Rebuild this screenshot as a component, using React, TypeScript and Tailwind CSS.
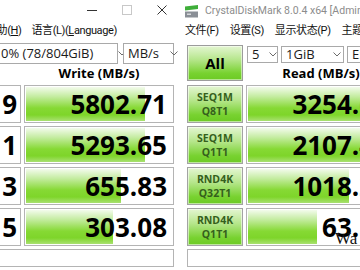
const barFill =
  "bg-[linear-gradient(to_bottom,#f3fbec_0%,#c4eca0_28%,#86d934_62%,#7ed52a_82%,#a9e171_100%)]";
const btnFill =
  "bg-[linear-gradient(to_bottom,#e4f6d2_0%,#b6e68c_40%,#78d230_80%,#6cca24_100%)]";

function Caret() {
  return (
    <svg width="8" height="5" viewBox="0 0 8 5" className="shrink-0">
      <path d="M0.5 0.5 L4 4 L7.5 0.5" fill="none" stroke="#6b6b6b" strokeWidth="1" />
    </svg>
  );
}

function Select({ text, className, caretGap }: { text: string; className: string; caretGap: string }) {
  return (
    <div
      className={`flex items-center border border-[#a9a9a9] bg-white text-[13px] text-[#1a1a1a] leading-none ${className}`}
    >
      <span className="whitespace-nowrap">{text}</span>
      <span className={caretGap}>
        <Caret />
      </span>
    </div>
  );
}

// one result cell: grey frame, green bar whose length is the score, number on top
function BarCell({ value, fill }: { value: string; fill: string }) {
  return (
    <div className="relative h-[38px] w-[150px] shrink-0 border border-[#b4b4b4] bg-white p-[1px]">
      <div className={`h-full ${barFill} ${fill}`} />
      <div className="absolute inset-0 flex items-center justify-end pr-[6px] text-[26px] font-bold leading-none text-black">
        {value}
      </div>
    </div>
  );
}

function TestLabel({ top, bottom }: { top: string; bottom: string }) {
  return (
    <div
      className={`flex h-[38px] w-[56px] shrink-0 flex-col items-center justify-center gap-[3px] border border-[#a3a3a3] ${btnFill} text-[10.5px] font-bold leading-[11px] text-[#35601c] shadow-[inset_0_0_0_1px_rgba(255,255,255,0.55)]`}
    >
      <span>{top}</span>
      <span>{bottom}</span>
    </div>
  );
}

function WindowControls() {
  return (
    <div className="flex h-[22px] shrink-0 justify-end">
      <svg width="35" height="22" viewBox="0 0 35 22">
        <path d="M13 10.5 H23" stroke="#333333" strokeWidth="1" />
      </svg>
      <svg width="35" height="22" viewBox="0 0 35 22">
        <rect x="13.5" y="5.5" width="9" height="9" fill="none" stroke="#c8c8c8" strokeWidth="1" />
      </svg>
      <svg width="35" height="22" viewBox="0 0 35 22">
        <path d="M13.5 5.5 L22.5 14.5 M22.5 5.5 L13.5 14.5" stroke="#333333" strokeWidth="1" />
      </svg>
    </div>
  );
}

function LeftWindow() {
  const rows = [
    { tail: "9", value: "5802.71", fill: "w-[119px]" },
    { tail: "1", value: "5293.65", fill: "w-[119px]" },
    { tail: "3", value: "655.83", fill: "w-[95px]" },
    { tail: "5", value: "303.08", fill: "w-[87px]" },
  ];
  return (
    <div className="flex w-[179px] shrink-0 flex-col bg-white">
      <WindowControls />
      <div className="-ml-[14px] flex h-[18px] items-center gap-[10px] whitespace-nowrap font-['Roboto','Noto_Sans_CJK_SC',sans-serif] text-[11px] tracking-[-0.4px] text-[#111]">
        <span>
          帮助(<span className="underline">H</span>)
        </span>
        <span>
          语言(L)(<span className="underline">L</span>anguage)
        </span>
      </div>
      <div className="mt-[3px] flex h-[21px] gap-[5px]">
        <Select text="0% (78/804GiB)" className="-ml-[3px] w-[121px] pl-[3px]" caretGap="ml-[25px]" />
        <Select text="MB/s" className="w-[51px] pl-[4px]" caretGap="ml-[11px]" />
      </div>
      <div className="flex h-[20px]">
        <div className="w-[24px]" />
        <div className="flex w-[150px] items-center justify-center text-[13px] font-bold text-black">
          Write (MB/s)
        </div>
      </div>
      <div className="mt-[1px] flex flex-col gap-[3px]">
        {rows.map((r) => (
          <div key={r.value} className="flex gap-[3px]">
            <div className="-ml-[2px] flex h-[38px] w-[23px] shrink-0 items-center justify-end border border-[#b4b4b4] bg-white pr-[3px] text-[26px] font-bold leading-none text-black">
              {r.tail}
            </div>
            <BarCell value={r.value} fill={r.fill} />
          </div>
        ))}
        <div className="-ml-[2px] h-[18px] w-[176px] border border-[#b4b4b4] bg-white" />
      </div>
    </div>
  );
}

function RightWindow() {
  const rows = [
    { top: "SEQ1M", bottom: "Q8T1", value: "3254.62", fill: "w-[116px]" },
    { top: "SEQ1M", bottom: "Q1T1", value: "2107.43", fill: "w-[115px]" },
    { top: "RND4K", bottom: "Q32T1", value: "1018.27", fill: "w-[101px]" },
    { top: "RND4K", bottom: "Q1T1", value: "63.58", fill: "w-[69px]" },
  ];
  return (
    <div className="flex min-w-0 flex-1 flex-col bg-white pl-[6px]">
      <div className="flex h-[22px] items-center gap-[7px] whitespace-nowrap">
        <svg width="13" height="13" viewBox="0 0 13 13" className="shrink-0">
          <path d="M0 1.5 L13 0 L13 4 L0 5.5 Z" fill="#3fae3a" />
          <rect x="0" y="6.5" width="13" height="6" fill="#8a8f96" />
          <rect x="2" y="8.5" width="4" height="1.5" fill="#d6d9dc" />
        </svg>
        <span className="font-['Roboto',sans-serif] text-[10.5px] text-[#8c8c8c]">
          CrystalDiskMark 8.0.4 x64 [Admin]
        </span>
      </div>
      <div className="flex h-[18px] items-center gap-[11px] whitespace-nowrap font-['Roboto','Noto_Sans_CJK_SC',sans-serif] text-[11px] tracking-[-0.4px] text-[#111]">
        <span>文件(F)</span>
        <span>设置(S)</span>
        <span>显示状态(P)</span>
        <span>主题(T)</span>
      </div>
      <div className="flex h-[45px] gap-[3px] pl-[2px]">
        <div
          className={`mt-[5px] flex h-[36px] w-[56px] shrink-0 items-center justify-center border border-[#9c9c9c] ${btnFill} text-[15px] font-bold text-black shadow-[inset_0_0_0_1px_rgba(255,255,255,0.5)]`}
        >
          All
        </div>
        <div className="flex flex-col">
          <div className="mt-[6px] flex h-[17px] gap-[3px] pl-[1px]">
            <Select text="5" className="w-[31px] pl-[4px]" caretGap="ml-[10px]" />
            <Select text="1GiB" className="w-[63px] pl-[4px]" caretGap="ml-[18px]" />
            <Select text="E: 10% (78/804GiB)" className="w-[150px] pl-[4px]" caretGap="ml-[10px]" />
          </div>
          <div className="flex h-[22px] w-[150px] items-center justify-center text-[13px] font-bold text-black">
            Read (MB/s)
          </div>
        </div>
      </div>
      <div className="flex flex-col gap-[3px] pl-[2px]">
        {rows.map((r) => (
          <div key={r.value} className="flex gap-[3px]">
            <TestLabel top={r.top} bottom={r.bottom} />
            <BarCell value={r.value} fill={r.fill} />
          </div>
        ))}
        <div className="h-[18px] w-[220px] shrink-0 border border-[#b4b4b4] bg-white" />
      </div>
    </div>
  );
}

export default function App() {
  return (
    <div className="relative flex h-[270px] w-[360px] overflow-hidden bg-white font-['Open_Sans','Noto_Sans_CJK_SC',sans-serif]">
      <LeftWindow />
      <RightWindow />
      <span className="absolute left-[335px] top-[230px] font-['Liberation_Serif',serif] text-[17px] leading-none text-[#111]">
        Wa
      </span>
    </div>
  );
}
